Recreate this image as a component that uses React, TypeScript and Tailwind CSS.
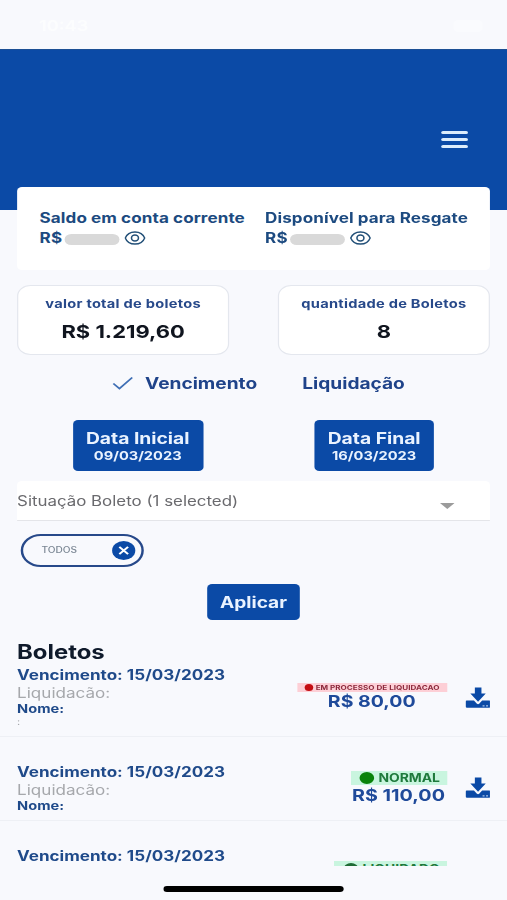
import React from 'react';

type Tone = 'danger' | 'success';

interface Boleto {
  id: number;
  dueDate: string;
  price: string;
}

const EyeIcon: React.FC = () => (
  <svg viewBox="0 0 22 14" preserveAspectRatio="none" className="w-[17.5px] h-[14px]" fill="none" stroke="#235078">
    <path d="M1 7C2.6 3 6.5 .9 11 .9S19.4 3 21 7C19.4 11 15.5 13.1 11 13.1S2.6 11 1 7Z" strokeWidth="1.5" />
    <ellipse cx="11" cy="7" rx="3.6" ry="3" strokeWidth="1.6" />
  </svg>
);

const DownloadIcon: React.FC = () => (
  <svg viewBox="0 0 25 21" preserveAspectRatio="none" className="w-[20.5px] h-[21px] shrink-0" fill="#0b4aa6">
    <path d="M9.3 .4h6.6v6H20.2L12.5 14.8 4.8 6.4h4.5Z" />
    <path d="M1.2 13.6H8.4L11.4 16.7Q12.5 17.6 13.6 16.7L16.6 13.6H23.8Q25 13.6 25 14.7V19.6Q25 20.7 23.8 20.7H1.2Q0 20.7 0 19.6V14.7Q0 13.6 1.2 13.6Z" />
    <path d="M17 18.3h2v1.3h-2zM20.5 18.3h2v1.3h-2z" fill="#a9c2e8" />
  </svg>
);

const Balance: React.FC<{ label: string }> = ({ label }) => (
  <div className="text-[#1c4a80]">
    <p className="text-[14px] leading-5 font-bold tracking-[0.07px] whitespace-nowrap">{label}</p>
    <div className="flex items-center h-[19px]">
      <span className="text-[14px] leading-[18px] font-bold tracking-[0.2px]">R$</span>
      <span className="ml-[2px] mt-1 w-[45px] h-[11px] rounded-full bg-[#d9d9d9]" />
      <span className="ml-1 mt-px">
        <EyeIcon />
      </span>
    </div>
  </div>
);

const SummaryCard: React.FC<{ label: string; value: string }> = ({ label, value }) => (
  <div className="w-[174px] h-[70px] rounded-[11px] border border-[#e4e7ee] bg-white pt-2 text-center">
    <p className="text-[12px] leading-5 font-bold text-[#27498a] tracking-[0.22px]">{label}</p>
    <p className="mt-1.5 text-[18px] leading-6 font-bold text-[#10151f]">{value}</p>
  </div>
);

const DateButton: React.FC<{ label: string; date: string; className: string }> = ({ label, date, className }) => (
  <button className={`flex flex-col items-center h-[51px] rounded bg-[#0b4aa6] pt-[10px] text-[#eaf3ff] ${className}`}>
    <span className="text-[15.8px] leading-[18px] font-bold">{label}</span>
    <span className="text-[12px] leading-[15px] font-bold">{date}</span>
  </button>
);

const DueDate: React.FC<{ date: string }> = ({ date }) => (
  <p className="text-[14px] leading-[18px] font-bold text-[#1f4a8a]">Vencimento: {date}</p>
);

const BoletoInfo: React.FC<{ dueDate: string }> = ({ dueDate }) => (
  <div>
    <DueDate date={dueDate} />
    <p className="text-[14px] leading-[17px] text-[#a6a8ac]">Liquidacão:</p>
    <p className="text-[12px] leading-[15px] font-bold text-[#1f4a8a]">Nome:</p>
  </div>
);

const badgeTones: Record<Tone, string> = {
  danger: 'bg-[#fdcfd6] text-[#8c2a3c]',
  success: 'bg-[#c9f5df] text-[#1f7a3c]',
};

const App: React.FC = () => {
  const boletos: Boleto[] = [
    { id: 1, dueDate: '15/03/2023', price: 'R$ 80,00' },
    { id: 2, dueDate: '15/03/2023', price: 'R$ 110,00' },
    { id: 3, dueDate: '15/03/2023', price: '' },
  ];

  return (
    <div className="w-[507px] h-[900px] overflow-hidden bg-[#f8f9fd]">
      {/* 416px wide canvas stretched to the full window width */}
      <div className="relative flex flex-col w-[416px] h-[900px] origin-top-left scale-x-[1.21875] font-['Inter',sans-serif]">
        {/* Status bar */}
        <div className="flex justify-between h-[49px] shrink-0 px-8 pt-4 text-[15px] leading-5 font-semibold text-[#fcfdfe]">
          <span>10:43</span>
          <span className="mt-1 mr-[-12px] w-6 h-3 rounded bg-[#fafbfe]" />
        </div>

        {/* Header */}
        <header className="flex justify-end h-[161px] shrink-0 border-t border-[#1c4f94] bg-[#0b4aa6] pt-[81px] pr-8">
          <div className="flex flex-col gap-[4.5px] w-[22.5px]">
            <span className="h-[2.5px] rounded-full bg-[#dcecfb]" />
            <span className="h-[2.5px] rounded-full bg-[#dcecfb]" />
            <span className="h-[2.5px] rounded-full bg-[#dcecfb]" />
          </div>
        </header>

        <section className="relative -mt-[23px] mx-3.5 h-[83px] shrink-0 rounded bg-white pt-[21px] pl-[18.5px] flex">
          <div className="w-[185px]">
            <Balance label="Saldo em conta corrente" />
          </div>
          <Balance label="Disponível para Resgate" />
        </section>

        <section className="flex justify-between h-[71px] mt-[15px] px-3.5">
          <SummaryCard label="valor total de boletos" value="R$ 1.219,60" />
          <SummaryCard label="quantidade de Boletos" value="8" />
        </section>

        <div className="flex items-center h-6 mt-[15px] pl-[92px] text-[15.7px] font-bold text-[#1f438a]">
          <svg viewBox="0 0 18 14" className="w-[18px] h-3.5" fill="none" stroke="#3f6fb5" strokeWidth="1.6">
            <path d="M1 7.5L6 12.5L16.5 1.5" />
          </svg>
          <span className="ml-[9px] mt-0.5 w-[129px]">Vencimento</span>
          <span className="mt-0.5">Liquidação</span>
        </div>

        <div className="flex mt-[25px] pl-[59.5px] gap-[91.5px]">
          <DateButton label="Data Inicial" date="09/03/2023" className="w-[107px]" />
          <DateButton label="Data Final" date="16/03/2023" className="w-[98px]" />
        </div>

        <div className="flex items-center justify-between mt-2.5 mx-3.5 h-10 shrink-0 rounded-t border-b border-[#e4e5e9] bg-white text-[13.85px] text-[#6a6a6e]">
          <span className="mt-0.5">Situação Boleto (1 selected)</span>
          <svg viewBox="0 0 14 7" className="w-[12px] h-[6px] mr-[29.5px] mt-2.5" preserveAspectRatio="none" fill="#9b9b9b">
            <path d="M0 0H14L7 7Z" />
          </svg>
        </div>

        <div className="flex items-center justify-between mt-[13px] ml-[17px] w-[100.5px] h-[33px] shrink-0 rounded-full border-2 border-[#27498a] pl-[15px] pr-[5px]">
          <span className="text-[8.3px] font-medium text-[#7b8794]">TODOS</span>
          <span className="flex items-center justify-center size-[18.5px] rounded-full bg-[#0b4aa6]">
            <svg viewBox="0 0 10 10" className="size-[9px]" stroke="#fff" strokeWidth="2">
              <path d="M1 1L9 9M9 1L1 9" />
            </svg>
          </span>
        </div>

        <button className="mt-[17px] ml-[170px] w-[76px] h-9 shrink-0 rounded bg-[#0b4aa6] pt-0.5 text-[15.7px] font-bold text-[#eaf3ff]">
          Aplicar
        </button>

        <h2 className="mt-5 pl-3.5 text-[19.6px] leading-6 font-bold text-[#0f1a2b]">Boletos</h2>

        {/* Boleto list */}
        <div className="flex justify-between h-[73px] shrink-0 border-b border-[#eef0f5] pt-0.5 px-3.5">
          <div>
            <BoletoInfo dueDate={boletos[0].dueDate} />
            <p className="text-[9px] leading-3 text-[#a6a8ac]">:</p>
          </div>
          <div className="flex gap-[15px]">
            <div className="flex flex-col items-center pt-[17px]">
              <div className={`flex items-center gap-[2.5px] w-[123px] h-[9px] pl-1.5 text-[6.65px] leading-[9px] font-bold whitespace-nowrap ${badgeTones.danger}`}>
                <span className="size-[7px] shrink-0 rounded-full bg-[#c40d12]" />
                <span className="mt-px">EM PROCESSO DE LIQUIDACAO</span>
              </div>
              <p className="text-[16px] leading-[18px] font-bold text-[#1f4a9a]">{boletos[0].price}</p>
            </div>
            <div className="pt-[21px]">
              <DownloadIcon />
            </div>
          </div>
        </div>

        <div className="flex justify-between h-[84px] shrink-0 border-b border-[#eef0f5] pt-[26px] px-3.5">
          <BoletoInfo dueDate={boletos[1].dueDate} />
          <div className="flex gap-[15px]">
            <div className="flex flex-col items-center pt-2">
              <div className={`flex items-center gap-1 w-[79px] h-[14px] pl-[7px] text-[11.4px] leading-[13px] font-bold ${badgeTones.success}`}>
                <span className="size-3 shrink-0 rounded-full bg-[#0a830a]" />
                <span className="mt-px">NORMAL</span>
              </div>
              <p className="mt-px text-[16.2px] leading-[18px] font-bold text-[#1f4a9a]">{boletos[1].price}</p>
            </div>
            <div className="pt-[14px]">
              <DownloadIcon />
            </div>
          </div>
        </div>

        <div className="flex justify-between h-[45px] shrink-0 pt-[26px] px-3.5">
          <DueDate date={boletos[2].dueDate} />
          {/* Badge that is still scrolled under the bottom edge */}
          <div className="mt-3.5 mr-[35px] h-[5px] overflow-hidden">
            <div className={`flex items-center gap-1 w-[93.5px] h-[16px] pl-2 text-[11.4px] leading-[16px] font-bold ${badgeTones.success}`}>
              <span className="size-3 shrink-0 rounded-full bg-[#1f6b35]" />
              LIQUIDADO
            </div>
          </div>
        </div>

        {/* Home indicator */}
        <div className="mt-5 mx-auto w-[148.5px] h-[6px] shrink-0 rounded-full bg-black" />
      </div>
    </div>
  );
};

export default App;
